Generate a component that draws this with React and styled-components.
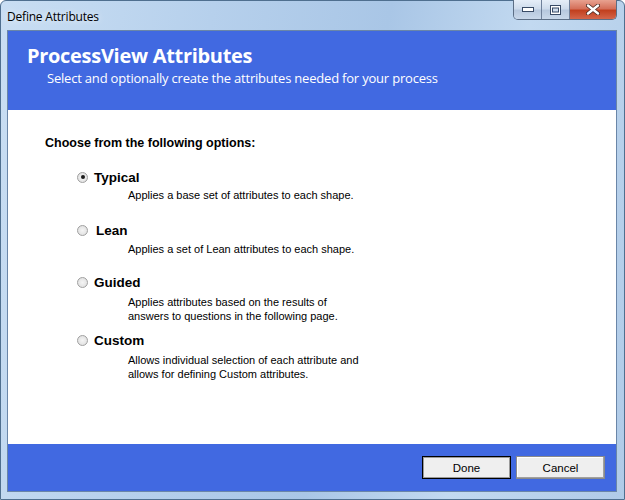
import React from "react";
import styled, { createGlobalStyle } from "styled-components";

const Global = createGlobalStyle`
  html, body { margin: 0; padding: 0; background: #fff; }
  body { width: 625px; height: 500px; overflow: hidden; }
`;

const Window = styled.div`
  width: 625px;
  height: 500px;
  box-sizing: border-box;
  display: flex;
  flex-direction: column;
  border: 1px solid #4f6f8f;
  border-radius: 6px 6px 0 0;
  background: linear-gradient(100deg, #c9def3 0%, #b6d0ec 30%, #a9c6e6 55%, #c2d9f0 75%, #b0cbe8 100%);
`;

const TitleBar = styled.div`
  height: 29px;
  display: flex;
  align-items: flex-start;
  justify-content: space-between;
`;

const Caption = styled.div`
  font-family: "Open Sans", "Noto Sans", sans-serif;
  font-size: 12px;
  color: #000;
  padding: 7px 0 0 6px;
  letter-spacing: -0.2px;
  text-shadow: 0 0 6px rgba(255,255,255,0.9);
`;

const CaptionButtons = styled.div`
  display: flex;
  margin-right: 7px;
  margin-top: -1px;
  border: 1px solid #5c6e85;
  border-top: none;
  border-radius: 0 0 5px 5px;
  overflow: hidden;
  height: 19px;
`;

const CapBtn = styled.div`
  width: ${p => p.$w}px;
  height: 19px;
  display: flex;
  align-items: center;
  justify-content: center;
  border-left: ${p => (p.$first ? "none" : "1px solid #6f809a")};
  background: ${p =>
    p.$close
      ? "linear-gradient(#e8a290 0%, #d5705a 45%, #c2401f 55%, #d4664b 100%)"
      : "linear-gradient(#e6eef8 0%, #cfdcec 45%, #b7c8de 55%, #c9d8ea 100%)"};
`;

const Body = styled.div`
  flex: 1;
  display: flex;
  padding: 0 7px 7px 6px;
`;

const Panel = styled.div`
  flex: 1;
  display: flex;
  flex-direction: column;
  border: 1px solid #6a86a8;
  background: #fff;
`;

const Header = styled.div`
  height: 79px;
  background: #4169e1;
  color: #fff;
  box-sizing: border-box;
  padding: 12px 0 0 19px;
  font-family: "Open Sans", "Noto Sans", sans-serif;
`;

const HeaderTitle = styled.div`
  font-size: 20px;
  font-weight: 700;
  line-height: 26px;
  letter-spacing: -0.3px;
`;

const HeaderSub = styled.div`
  font-size: 13px;
  line-height: 17px;
  margin: 1px 0 0 20px;
  letter-spacing: -0.2px;
`;

const Main = styled.div`
  flex: 1;
  padding: 25px 0 0 37px;
  font-family: "Liberation Sans", Arial, sans-serif;
  color: #000;
`;

const Prompt = styled.div`
  font-size: 12.5px;
  font-weight: 700;
  line-height: 16px;
`;

const Options = styled.div`
  display: flex;
  flex-direction: column;
  margin: 18px 0 0 32px;
`;

const Option = styled.div`
  height: ${p => p.$h}px;
`;

const OptionRow = styled.div`
  display: flex;
  align-items: center;
  height: 16px;
`;

const Radio = styled.span`
  width: 11px;
  height: 11px;
  box-sizing: border-box;
  border-radius: 50%;
  border: 1px solid #a0a0a0;
  background: radial-gradient(circle, #f4f4f4 0%, #e6e6e6 60%, #d6d6d6 100%);
  display: flex;
  align-items: center;
  justify-content: center;
  &::after {
    content: "";
    width: 4px;
    height: 4px;
    border-radius: 50%;
    background: ${p => (p.$checked ? "#1a1a1a" : "transparent")};
  }
`;

const Label = styled.span`
  font-size: 13.5px;
  font-weight: 700;
  margin-left: ${p => p.$ml}px;
`;

const Desc = styled.div`
  font-size: 11px;
  line-height: 14px;
  margin: ${p => p.$mt}px 0 0 51px;
`;

const Footer = styled.div`
  height: 47px;
  background: #4169e1;
  display: flex;
  justify-content: flex-end;
  align-items: flex-start;
  gap: 5px;
  padding: 12px 11px 0 0;
  box-sizing: border-box;
`;

const Button = styled.button`
  width: 89px;
  height: 23px;
  box-sizing: border-box;
  border: 1px solid ${p => (p.$default ? "#000" : "#8a8a8a")};
  box-shadow: ${p => (p.$default ? "inset 0 0 0 1px #9a9a9a" : "inset -1px -1px 0 #a0a0a0, inset 1px 1px 0 #fff")};
  background: #efefef;
  font-family: "Liberation Sans", Arial, sans-serif;
  font-size: 11.5px;
  color: #000;
  padding: 0;
`;

const options = [
  { label: "Typical", ml: 6, checked: true, desc: ["Applies a base set of attributes to each shape."], h: 53, mt: 3 },
  { label: "Lean", ml: 8, desc: ["Applies a set of Lean attributes to each shape."], h: 52, mt: 4 },
  { label: "Guided", ml: 6, desc: ["Applies attributes based on the results of", "answers to questions in the following page."], h: 58, mt: 5 },
  { label: "Custom", ml: 6, desc: ["Allows individual selection of each attribute and", "allows for defining Custom attributes."], h: 60, mt: 5 },
];

export default function App() {
  return (
    <>
      <Global />
      <Window>
        <TitleBar>
          <Caption>Define Attributes</Caption>
          <CaptionButtons>
            <CapBtn $w={27} $first>
              <svg width="12" height="6" viewBox="0 0 12 6"><rect x="0.5" y="0.5" width="11" height="4" fill="#fff" stroke="#394b66" /></svg>
            </CapBtn>
            <CapBtn $w={27}>
              <svg width="11" height="10" viewBox="0 0 11 10"><rect x="0.5" y="0.5" width="10" height="9" fill="#fff" stroke="#394b66" /><rect x="2.5" y="3" width="6" height="4" fill="#cfdcec" stroke="#394b66" /></svg>
            </CapBtn>
            <CapBtn $w={46} $close>
              <svg width="14" height="11" viewBox="0 0 14 11"><path d="M2 1.5 L12 9.5 M12 1.5 L2 9.5" stroke="#4a2a22" strokeWidth="4" strokeLinecap="round" /><path d="M2 1.5 L12 9.5 M12 1.5 L2 9.5" stroke="#fff" strokeWidth="2.4" strokeLinecap="round" /></svg>
            </CapBtn>
          </CaptionButtons>
        </TitleBar>
        <Body>
          <Panel>
            <Header>
              <HeaderTitle>ProcessView Attributes</HeaderTitle>
              <HeaderSub>Select and optionally create the attributes needed for your process</HeaderSub>
            </Header>
            <Main>
              <Prompt>Choose from the following options:</Prompt>
              <Options>
                {options.map(o => (
                  <Option key={o.label} $h={o.h}>
                    <OptionRow>
                      <Radio $checked={o.checked} />
                      <Label $ml={o.ml}>{o.label}</Label>
                    </OptionRow>
                    <Desc $mt={o.mt}>
                      {o.desc.map(d => (
                        <div key={d}>{d}</div>
                      ))}
                    </Desc>
                  </Option>
                ))}
              </Options>
            </Main>
            <Footer>
              <Button $default>Done</Button>
              <Button>Cancel</Button>
            </Footer>
          </Panel>
        </Body>
      </Window>
    </>
  );
}
